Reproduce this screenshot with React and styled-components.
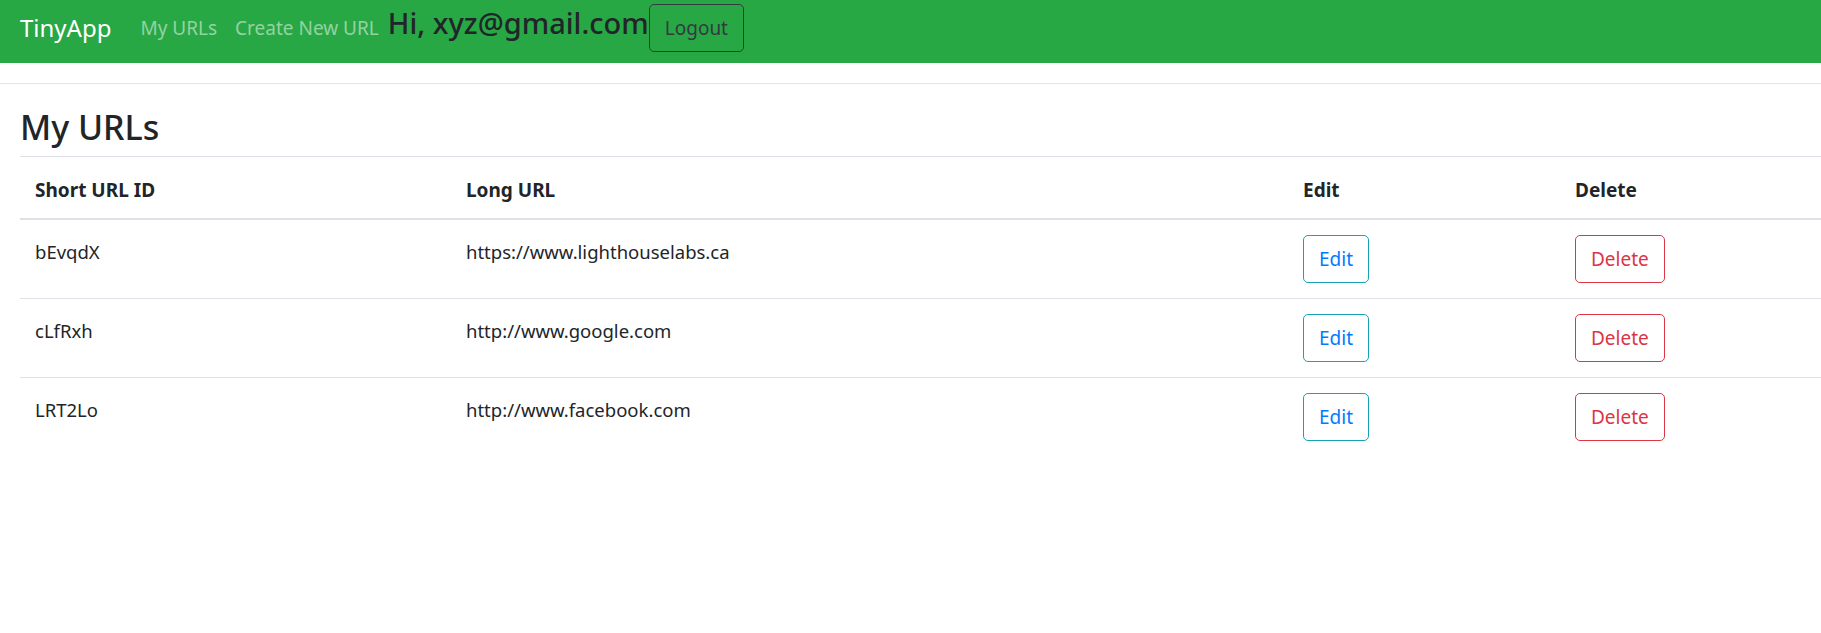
import styled, { createGlobalStyle } from "styled-components";

const GlobalStyle = createGlobalStyle`
  html, body {
    margin: 0;
    padding: 0;
    background: #fff;
    font-family: "Noto Sans", "Open Sans", sans-serif;
    font-size: 20px;
    color: #212529;
    overflow-x: hidden;
  }
  * { box-sizing: border-box; }
`;

const Navbar = styled.nav`
  display: flex;
  align-items: center;
  height: 63px;
  padding: 5px 20px 12px;
  background-color: #28a745;
`;

const Brand = styled.a`
  font-size: 24px;
  line-height: 36px;
  color: #fff;
  margin-right: 20px;
  text-decoration: none;
`;

const NavLink = styled.a`
  font-size: 19px;
  line-height: 30px;
  padding: 0 9px;
  color: rgba(255, 255, 255, 0.5);
  text-decoration: none;
`;

const Greeting = styled.h4`
  margin: 0 0 10px 0;
  font-size: 29px;
  font-weight: 500;
  line-height: 36px;
  color: #212529;
`;

const Button = styled.button`
  font-family: inherit;
  font-size: 19px;
  line-height: 30px;
  padding: 8px 15px;
  background: transparent;
  border: 1.25px solid ${(p) => p.$border};
  border-radius: 5px;
  color: ${(p) => p.$color};
  cursor: pointer;
`;

const Divider = styled.hr`
  margin: 20px 0 0;
  border: 0;
  border-top: 1.25px solid #e5e5e5;
`;

const Container = styled.main`
  padding: 22px 0 0 20px;
`;

const Title = styled.h3`
  margin: 0 0 8px;
  font-size: 34px;
  font-weight: 500;
  line-height: 42px;
`;

const Table = styled.table`
  width: 100%;
  border-collapse: collapse;
  table-layout: fixed;
`;

const Th = styled.th`
  text-align: left;
  font-weight: 700;
  font-size: 19px;
  line-height: 30px;
  padding: 18px 15px 13px;
  border-top: 1.25px solid #dee2e6;
  border-bottom: 2.5px solid #dee2e6;
  width: ${(p) => p.$w || "auto"};
`;

const Td = styled.td`
  vertical-align: top;
  font-size: 18.5px;
  line-height: 30px;
  padding: 17px 15px 13px;
  border-top: 1.25px solid #dee2e6;
`;

const ButtonCell = styled(Td)`
  padding: 15px;
`;

const urls = [
  { id: "bEvqdX", long: "https://www.lighthouselabs.ca" },
  { id: "cLfRxh", long: "http://www.google.com" },
  { id: "LRT2Lo", long: "http://www.facebook.com" },
];

export default function App() {
  return (
    <>
      <GlobalStyle />
      <Navbar>
        <Brand href="#">TinyApp</Brand>
        <NavLink href="#">My URLs</NavLink>
        <NavLink href="#">Create New URL</NavLink>
        <Greeting>Hi, xyz@gmail.com</Greeting>
        <Button $border="#343a40" $color="#343a40">Logout</Button>
      </Navbar>
      <Divider />
      <Container>
        <Title>My URLs</Title>
        <Table>
          <thead>
            <tr>
              <Th $w="431px">Short URL ID</Th>
              <Th $w="837px">Long URL</Th>
              <Th $w="272px">Edit</Th>
              <Th>Delete</Th>
            </tr>
          </thead>
          <tbody>
            {urls.map((u) => (
              <tr key={u.id}>
                <Td>{u.id}</Td>
                <Td>{u.long}</Td>
                <ButtonCell>
                  <Button $border="#17a2b8" $color="#007bff">Edit</Button>
                </ButtonCell>
                <ButtonCell>
                  <Button $border="#dc3545" $color="#dc3545">Delete</Button>
                </ButtonCell>
              </tr>
            ))}
          </tbody>
        </Table>
      </Container>
    </>
  );
}
